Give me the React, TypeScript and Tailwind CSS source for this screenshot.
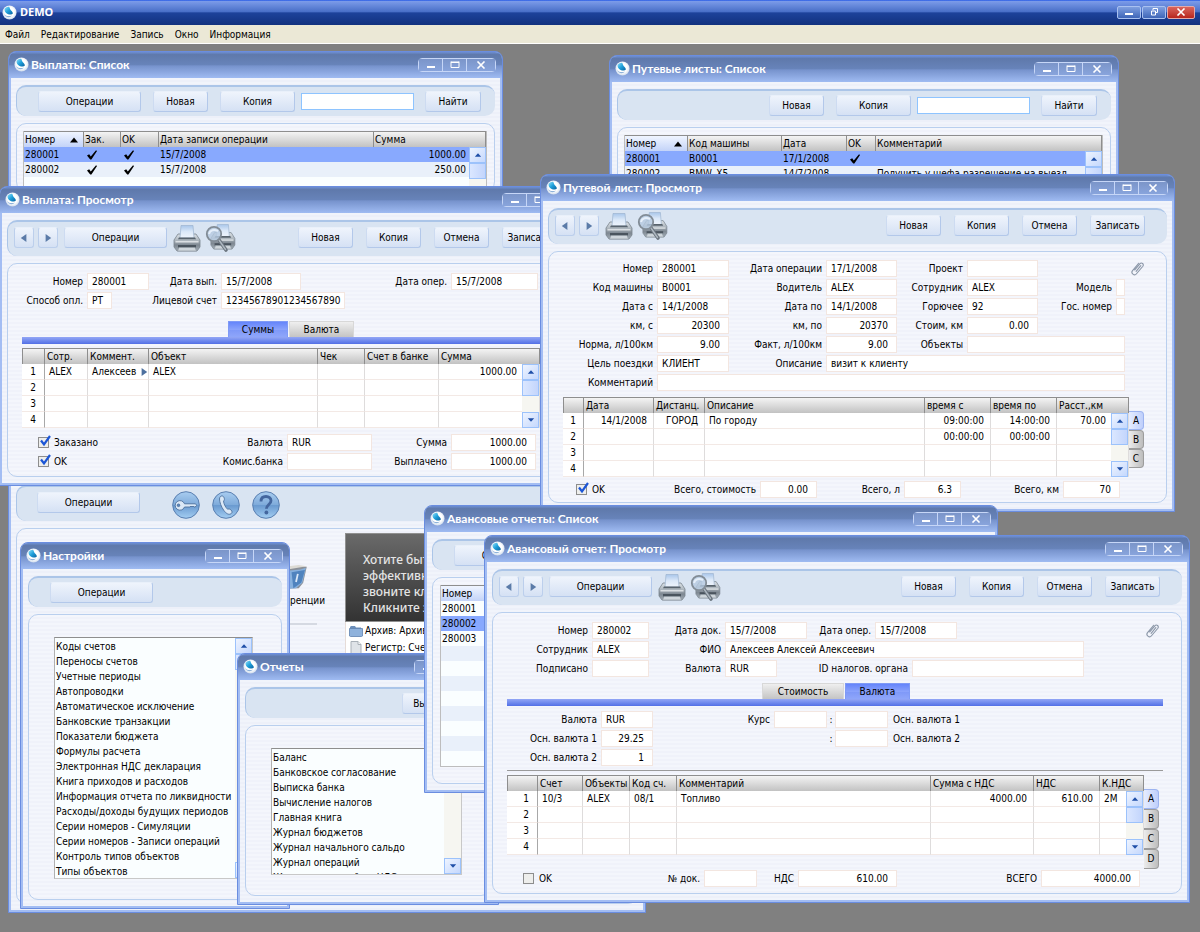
import { useId } from "react";
import type { ReactNode } from "react";

/* ---------- drawings ---------- */

function Logo() {
  return (
    <svg viewBox="0 0 16 16" className="h-[15px] w-[15px] shrink-0" aria-hidden="true">
      <defs>
        <linearGradient id="logo-blue" x1="0" y1="0" x2="1" y2="1">
          <stop offset="0" stopColor="#8fe0fa" />
          <stop offset="0.5" stopColor="#1fa0da" />
          <stop offset="1" stopColor="#0b62a0" />
        </linearGradient>
        <radialGradient id="logo-ball" cx="0.5" cy="0.45" r="0.55">
          <stop offset="0.6" stopColor="#ffffff" />
          <stop offset="1" stopColor="#cfdcec" />
        </radialGradient>
      </defs>
      <circle cx="8" cy="8" r="7.500" fill="url(#logo-ball)" />
      <path d="M2.800 4C4.200 2.300 6.200 1.500 8 2c.2 1.600.8 2.800 2 4 1 1.100 1.800 2.200 1.500 3-.8 1.300-3.300 1.500-5.500.6C3.500 8.400 2.300 6.400 2.800 4z" fill="url(#logo-blue)" />
      <path d="M8 1.500c2.500.6 4.800 3 5.200 6-.8-2-2.800-2.500-3.700-3.300C8.700 3.400 8.200 2.500 8 1.500z" fill="#ffffff" />
      <path d="M2.300 9.500c1.800 2.300 5.200 3 8.200 1.700-1.800 2.800-6.600 2.400-8.200-1.700z" fill="#8fb3da" />
    </svg>
  );
}

function PrinterShape() {
  return (
    <g>
      <path d="M5 9h18l4 6v7l-3 4H4l-3-4v-7z" fill="url(#printer-body)" stroke="#7a848d" strokeWidth="0.800" />
      <path d="M8 .500h12l1 12.500H7z" fill="url(#printer-paper)" stroke="#9db4d0" strokeWidth="0.700" />
      <path d="M6 12.500h16l1 1.800H5z" fill="#58636d" />
      <path d="M2.500 16h23v1.500h-23z" fill="#e8ecef" opacity="0.800" />
      <path d="M5 20h18v2.500H5z" fill="#4a545e" />
      <path d="M6 22.500h16l1.500 3.500h-19z" fill="#cfd6dc" stroke="#8b959e" strokeWidth="0.600" />
    </g>
  );
}

function PrinterDefs() {
  return (
    <defs>
      <linearGradient id="printer-body" x1="0" y1="0" x2="0" y2="1">
        <stop offset="0" stopColor="#dde3e8" />
        <stop offset="0.400" stopColor="#aab3bb" />
        <stop offset="0.650" stopColor="#7d8791" />
        <stop offset="1" stopColor="#a3adb6" />
      </linearGradient>
      <linearGradient id="printer-paper" x1="0" y1="0" x2="0" y2="1">
        <stop offset="0" stopColor="#a9c6ea" />
        <stop offset="0.500" stopColor="#dbe8f8" />
        <stop offset="1" stopColor="#eef4fc" />
      </linearGradient>
    </defs>
  );
}

function PrintIcons() {
  return (
    <div className="flex items-center gap-1 pt-0.5">
      <button type="button" aria-label="Печать">
        <svg viewBox="0 0 28 27" className="h-[27px] w-7">
          <PrinterDefs />
          <PrinterShape />
        </svg>
      </button>
      <button type="button" aria-label="Просмотр печати">
        <svg viewBox="0 0 31 29" className="h-[29px] w-[31px]">
          <PrinterDefs />
          <g transform="translate(5 0) scale(0.920 0.960)">
            <PrinterShape />
          </g>
          <path d="M14 16l7 10" stroke="#6a747e" strokeWidth="3.600" strokeLinecap="round" />
          <path d="M14 16l6.500 9.500" stroke="#aeb8c1" strokeWidth="1.400" strokeLinecap="round" />
          <circle cx="9" cy="10" r="7.200" fill="#b5c9e0" fillOpacity="0.800" stroke="#828c96" strokeWidth="1.800" />
          <path d="M4 10c1-4 5-5 9-3" stroke="#e6effa" strokeWidth="2" fill="none" />
        </svg>
      </button>
    </div>
  );
}

function Paperclip() {
  return (
    <svg viewBox="0 0 14 16" className="h-[15px] w-3.5" aria-hidden="true" fill="none" stroke="#8b97a8" strokeWidth="1.200">
      <path d="M3.500 9.500l5.500-6.500a2 2 0 0 1 3.200 2.600l-6.800 8a2.700 2.700 0 0 1-4.200-3.400l6.500-7.800M5 11l5-6" strokeLinecap="round" />
    </svg>
  );
}

function Tick() {
  return (
    <svg viewBox="0 0 12 10" className="h-2.5 w-3" aria-hidden="true">
      <path d="M1 5.500l2.200-1.200 1.600 2.200L9.800.600l1.400.200-5.800 8.600H4.200z" fill="#000000" />
    </svg>
  );
}

function Triangle({ dir, className }: { dir: "up" | "down" | "left" | "right"; className: string }) {
  const d = {
    up: "M5 2l4 6H1z",
    down: "M1 2h8l-4 6z",
    left: "M8 0v10L1 5z",
    right: "M2 0v10l7-5z",
  }[dir];
  return (
    <svg viewBox="0 0 10 10" preserveAspectRatio="none" className={className} aria-hidden="true">
      <path d={d} fill="currentColor" />
    </svg>
  );
}

function RoundIcon({ kind, label }: { kind: "key" | "phone" | "help"; label: string }) {
  return (
    <button type="button" aria-label={label}>
      <svg viewBox="0 0 28 28" className="h-7 w-7">
        <defs>
          <linearGradient id="round-fill" x1="0" y1="0" x2="0" y2="1">
            <stop offset="0" stopColor="#a9cdf0" />
            <stop offset="0.5" stopColor="#7eaada" />
            <stop offset="0.52" stopColor="#6a9ad0" />
            <stop offset="1" stopColor="#a4cef2" />
          </linearGradient>
        </defs>
        <circle cx="14" cy="14" r="13.300" fill="url(#round-fill)" stroke="#5a7fb0" strokeWidth="1" />
        {kind === "key" && (
          <g fill="#dbe8f6" stroke="#4c6f9c" strokeWidth="0.900">
            <path d="M12.500 12.800h11l1.200 1.500-1.500 1.700h-1.200l-1-1-1 1-1-1-1 1h-5.500a4.800 4.800 0 1 1 0-3.200z" />
            <circle cx="6.500" cy="14.300" r="1.300" fill="#5a86bd" />
          </g>
        )}
        {kind === "phone" && (
          <path
            d="M8.500 5.500c1.500-1.200 3-.4 3.600 1.200.5 1.400.5 2.500-.6 3.300.4 3.200 1.800 6.200 4.200 8.300 1.200-.6 2.300-.3 3.300.7 1.300 1.200 1.500 2.700.1 3.700-2.300 1.500-5-.1-7.200-3.200C9.200 15.800 7.600 11.300 7.500 8c0-1 .3-1.900 1-2.500z"
            fill="#dbe8f6"
            stroke="#4c6f9c"
            strokeWidth="0.900"
          />
        )}
        {kind === "help" && (
          <g>
            <path d="M9 10.500c0-3.300 2.200-5 5-5s5 1.700 5 4.300c0 3.600-4.600 3.900-4.600 8" fill="none" stroke="#44669e" strokeWidth="2.800" />
            <circle cx="14.400" cy="21.500" r="1.900" fill="#44669e" />
          </g>
        )}
      </svg>
    </button>
  );
}

/* ---------- window chrome ---------- */

function WindowControls({ tone = "soft" }: { tone?: "soft" | "main" }) {
  const main = tone === "main";
  const frame = main
    ? "flex h-[14px] gap-px pb-px text-white"
    : "flex h-[14px] divide-x divide-[#c6d6f7] rounded-sm border border-[#c6d6f7] text-white";
  const cell = main
    ? "flex w-6 items-center justify-center rounded-[2px] border border-[#a9c1f0] bg-linear-to-b from-[#7f9fe0] to-[#3f66b8]"
    : "flex w-6 items-center justify-center bg-linear-to-b from-[#7b95c9] to-[#88a4dc]";
  const close = main
    ? "flex w-7 items-center justify-center rounded-[2px] border border-[#e3a9a9] bg-linear-to-b from-[#d9635b] to-[#b8241c]"
    : "flex w-7 items-center justify-center bg-linear-to-b from-[#7b95c9] to-[#88a4dc]";
  return (
    <div className={frame}>
      <button type="button" aria-label="Свернуть" className={cell}>
        <svg viewBox="0 0 10 8" className="h-2 w-2.5"><path d="M1 5h8v2H1z" fill="currentColor" /></svg>
      </button>
      <button type="button" aria-label="Развернуть" className={cell}>
        <svg viewBox="0 0 10 8" className="h-2 w-2.5" fill="none" stroke="currentColor">
          {main ? <path d="M4 2V.500h4.500v4H7M2.500 3h4v4h-4z" /> : <path d="M1 1h8M1 .500v6h8v-6M1 1.500h8" />}
        </svg>
      </button>
      <button type="button" aria-label="Закрыть" className={close}>
        <svg viewBox="0 0 10 8" className="h-2 w-2.5" fill="none" stroke="currentColor" strokeWidth="1.600">
          <path d="M1.500.500l7 7M8.500.500l-7 7" />
        </svg>
      </button>
    </div>
  );
}

function Window({ title, place, children }: { title: string; place: string; children: ReactNode }) {
  return (
    <section
      className={`absolute flex flex-col rounded-t-lg border border-[#6a8de0] bg-[#a3bdf3] ${place}`}
    >
      <header className="flex h-[26px] shrink-0 items-center gap-0.5 rounded-t-[7px] bg-[linear-gradient(#6d8fd4_0%,#5f79ab_10%,#6783b9_48%,#7793cd_54%,#9fbbf2_100%)] pr-1.5 pb-px pl-[5px]">
        <Logo />
        <h2 className="flex-1 truncate font-['Lato',sans-serif] text-xs font-bold text-white">{title}</h2>
        <WindowControls />
      </header>
      <div className="mx-0.5 mb-0.5 flex min-h-0 flex-1 flex-col gap-[7px] bg-[repeating-linear-gradient(#f1f4fb_0px,#f1f4fb_2px,#edf0f9_2px,#edf0f9_4px)] px-[5px] pt-[7px] pb-1.5">
        {children}
      </div>
    </section>
  );
}

function Toolbar({ tall = false, children }: { tall?: boolean; children?: ReactNode }) {
  return (
    <div
      className={`flex shrink-0 items-center rounded-[10px] border-t-2 border-l border-t-[#abc5e8] border-l-[#abc5e8] bg-[#d9e4f2] ${tall ? "h-9 pb-[3px]" : "h-[31px]"}`}
    >
      {children}
    </div>
  );
}

function Panel({ className = "", children }: { className?: string; children?: ReactNode }) {
  return (
    <div
      className={`flex min-h-0 flex-1 flex-col rounded-[10px] border border-[#b9cfee] bg-[repeating-linear-gradient(#f4f6fc_0px,#f4f6fc_2px,#f0f2fa_2px,#f0f2fa_4px)] ${className}`}
    >
      {children}
    </div>
  );
}

function Btn({ w = "w-[55px]", children }: { w?: string; children: ReactNode }) {
  return (
    <button
      type="button"
      className={`h-[21px] shrink-0 rounded-[3px] border border-t-[#e9f0fa] border-r-[#b3c8ea] border-b-[#b3c8ea] border-l-[#cddbf1] bg-linear-to-b from-[#eff4fc] to-[#d5e1f4] text-center leading-none whitespace-nowrap text-black ${w}`}
    >
      {children}
    </button>
  );
}

function NavButtons() {
  return (
    <div className="flex gap-1 text-[#5b7ba8]">
      <button type="button" aria-label="Предыдущая запись" className="flex h-[21px] w-5 items-center justify-center rounded-[3px] border border-[#bccfec] border-t-[#e9f0fa] bg-linear-to-b from-[#eff4fc] to-[#d5e1f4]">
        <Triangle dir="left" className="h-2 w-2" />
      </button>
      <button type="button" aria-label="Следующая запись" className="flex h-[21px] w-5 items-center justify-center rounded-[3px] border border-[#bccfec] border-t-[#e9f0fa] bg-linear-to-b from-[#eff4fc] to-[#d5e1f4]">
        <Triangle dir="right" className="h-2 w-2" />
      </button>
    </div>
  );
}

function ListToolbar({ operations = false }: { operations?: boolean }) {
  return (
    <Toolbar>
      {operations && (
        <div className="pl-[21px]">
          <Btn w="w-[103px]">Операции</Btn>
        </div>
      )}
      <div className="ml-auto flex items-center gap-3 pr-3.5">
        <Btn>Новая</Btn>
        <Btn w="w-[75px]">Копия</Btn>
        <div className="-mr-px -ml-1.5">
          <input aria-label="Поиск" className="block h-[17px] w-[113px] border border-[#8ec4ff] bg-white px-1" />
        </div>
        <Btn w="w-14">Найти</Btn>
      </div>
    </Toolbar>
  );
}

function RecordToolbar({ operations = true }: { operations?: boolean }) {
  return (
    <Toolbar tall>
      <div className="flex items-center gap-1.5 pl-1.5">
        <NavButtons />
        {operations && <Btn w="w-[103px]">Операции</Btn>}
        <PrintIcons />
      </div>
      <div className="ml-auto flex gap-[13px] pr-[22px]">
        <Btn>Новая</Btn>
        <Btn>Копия</Btn>
        <Btn>Отмена</Btn>
        <Btn>Записать</Btn>
      </div>
    </Toolbar>
  );
}

/* ---------- form parts ---------- */

function Field({ label, lw, w, value = "", right = false }: { label: string; lw: string; w: string; value?: string; right?: boolean }) {
  const id = useId();
  return (
    <>
      <label htmlFor={id} className={`flex shrink-0 justify-end pr-1 whitespace-nowrap ${lw}`}>
        {label}
      </label>
      <input
        id={id}
        defaultValue={value}
        className={`block h-[17px] shrink-0 border border-[#f3e6e0] bg-white ${right ? "pr-2 text-right" : w === "w-[9px]" ? "" : "pl-1"} ${w}`}
      />
    </>
  );
}

function Row({ children }: { children: ReactNode }) {
  return <div className="flex items-center">{children}</div>;
}

function Check({ label, checked = false, className }: { label: string; checked?: boolean; className: string }) {
  return (
    <label className={`flex shrink-0 items-center gap-[5px] ${className}`}>
      <span className="relative block h-[11px] w-[11px]">
        <input
          type="checkbox"
          defaultChecked={checked}
          className="peer block h-[11px] w-[11px] appearance-none border border-[#8d8d8d] bg-[#eeeeec]"
        />
        <svg viewBox="0 0 12 12" className="pointer-events-none absolute -top-0.5 left-0.5 hidden h-3 w-3 peer-checked:block" fill="none" stroke="#1c56d6" strokeWidth="2.200">
          <path d="M1 5.500l3 4L10 1" />
        </svg>
      </span>
      {label}
    </label>
  );
}

function Tab({ active = false, w, children }: { active?: boolean; w: string; children: ReactNode }) {
  return (
    <button
      type="button"
      className={`h-4 border border-b-0 text-center leading-none ${
        active
          ? "border-[#7f9af6] bg-[linear-gradient(#6585fb_0%,#8aa2fb_50%,#7e98f8_52%,#8fa6fa_100%)]"
          : "border-[#d8d8d8] bg-linear-to-b from-[#efefef] to-[#c4c4c4]"
      } ${w}`}
    >
      {children}
    </button>
  );
}

function TabStrip({ indent, children }: { indent: string; children: ReactNode }) {
  return (
    <div className="pr-[18px] pl-3.5">
      <div className={`flex gap-px ${indent}`}>{children}</div>
      <div className="h-[7px] bg-linear-to-b from-[#93a6f5] to-[#526fe6]" />
    </div>
  );
}

function ScrollBar({ className }: { className: string }) {
  return (
    <div className={`absolute flex w-[17px] flex-col bg-[#f6f6f1] text-[#1f4fa8] ${className}`}>
      <button type="button" aria-label="Вверх" className="flex h-4 shrink-0 items-center justify-center border border-[#9cc2fb] bg-linear-to-br from-[#eef4ff] to-[#c5d8fd]">
        <Triangle dir="up" className="h-1.5 w-2" />
      </button>
      <div className="h-4 shrink-0 border border-[#9cc2fb] bg-linear-to-r from-[#dbe7ff] to-[#c3d5fc]" />
      <button type="button" aria-label="Вниз" className="mt-auto flex h-4 shrink-0 items-center justify-center border border-[#9cc2fb] bg-linear-to-br from-[#eef4ff] to-[#c5d8fd]">
        <Triangle dir="down" className="h-1.5 w-2" />
      </button>
    </div>
  );
}

type Col = { head: string; w?: string; cell?: string };

function EntryTable({ cols, rows }: { cols: Col[]; rows: ReactNode[][] }) {
  return (
    <div className="relative min-w-0 flex-1">
      <table className="w-full table-fixed border-separate border-spacing-0">
        <thead>
          <tr>
            {cols.map((c, i) => (
              <th
                key={i}
                className={`h-4 border-t border-r border-[#8e8e8e] bg-linear-to-b from-[#f4f4f4] to-[#c2c2c2] p-0 pl-0.5 text-left leading-none font-normal whitespace-nowrap first:border-l ${c.w ?? ""}`}
              >
                {c.head}
              </th>
            ))}
          </tr>
        </thead>
        <tbody>
          {rows.map((r, i) => (
            <tr key={i}>
              {cols.map((c, j) => (
                <td
                  key={j}
                  className={`h-4 border-r border-b border-r-[#dedcdc] border-b-[#f3e9e5] bg-white p-0 leading-none whitespace-nowrap first:border-r-[#a8a8a8] ${c.cell ?? "pl-1"}`}
                >
                  {r[j] ?? ""}
                </td>
              ))}
            </tr>
          ))}
        </tbody>
      </table>
      <ScrollBar className="top-4 right-px bottom-0" />
    </div>
  );
}

function SideTabs({ names, size }: { names: string[]; size: string }) {
  return (
    <div className="flex w-[15px] shrink-0 flex-col pt-3.5">
      {names.map((n, i) => (
        <button
          key={n}
          type="button"
          className={`rounded-r-sm border border-l-0 text-center leading-none ${size} ${
            i === 0
              ? "border-[#9db4f0] bg-linear-to-r from-[#e6edff] to-[#bfcffb]"
              : "border-[#9c9c9c] bg-linear-to-r from-[#ececec] to-[#bdbdbd]"
          }`}
        >
          {n}
        </button>
      ))}
    </div>
  );
}

function ListTable({ cols, rows, selected, blank = 4, scroll = true }: { cols: Col[]; rows: ReactNode[][]; selected: number; blank?: number; scroll?: boolean }) {
  const all = [...rows, ...Array.from({ length: blank }, () => [] as ReactNode[])];
  return (
    <div className="relative border-x border-b border-[#bdbdbd]">
      <table className="w-full table-fixed border-separate border-spacing-0">
        <thead>
          <tr>
            {cols.map((c, i) => (
              <th
                key={i}
                className={`h-4 border-t border-r border-[#8e8e8e] bg-linear-to-b p-0 pl-px text-left leading-none font-normal whitespace-nowrap ${
                  i === 0 ? "from-[#f0f5ff] to-[#c3d3f8]" : "from-[#f4f4f4] to-[#c2c2c2]"
                } ${c.w ?? ""}`}
              >
                {i === 0 ? (
                  <span className="flex items-center justify-between pr-1">
                    {c.head}
                    <Triangle dir="up" className="h-2 w-2.5" />
                  </span>
                ) : (
                  c.head
                )}
              </th>
            ))}
          </tr>
        </thead>
        <tbody>
          {all.map((r, i) => (
            <tr key={i} className={i === selected ? "bg-[#88a9fe]" : i % 2 ? "bg-[#e9f0fa]" : "bg-[#fafeff]"}>
              {cols.map((c, j) => (
                <td key={j} className={`h-[15px] p-0 leading-none whitespace-nowrap ${c.cell ?? "pl-0.5"}`}>
                  {r[j] ?? ""}
                </td>
              ))}
            </tr>
          ))}
        </tbody>
      </table>
      {scroll && <ScrollBar className="top-4 right-0 bottom-0" />}
    </div>
  );
}

function ListBox({ items }: { items: string[] }) {
  return (
    <div className="relative mt-[22px] mr-7 mb-5 ml-[25px] min-h-0 flex-1 overflow-hidden border border-t-[#8e8e8e] border-r-[#c8c8c8] border-b-[#c8c8c8] border-l-[#b0b0b0] bg-[#fafeff] pt-px">
      <ul>
        {items.map((t) => (
          <li key={t} className="h-[15px] pl-px leading-[15px] whitespace-nowrap">
            {t}
          </li>
        ))}
      </ul>
      <ScrollBar className="top-0 right-0 bottom-0" />
    </div>
  );
}

/* ---------- data ---------- */

const settings = [
  "Коды счетов",
  "Переносы счетов",
  "Учетные периоды",
  "Автопроводки",
  "Автоматическое исключение",
  "Банковские транзакции",
  "Показатели бюджета",
  "Формулы расчета",
  "Электронная НДС декларация",
  "Книга приходов и расходов",
  "Информация отчета по ликвидности",
  "Расходы/доходы будущих периодов",
  "Серии номеров - Симуляции",
  "Серии номеров - Записи операций",
  "Контроль типов объектов",
  "Типы объектов",
];

const reports = [
  "Баланс",
  "Банковское согласование",
  "Выписка банка",
  "Вычисление налогов",
  "Главная книга",
  "Журнал бюджетов",
  "Журнал начального сальдо",
  "Журнал операций",
  "Журнал операций по НДС",
];

const menu = ["Файл", "Редактирование", "Запись", "Окно", "Информация"];

/* ---------- windows ---------- */

function PaymentsList() {
  return (
    <Window title="Выплаты: Список" place="top-[7px] left-2 h-[150px] w-[495px]">
      <ListToolbar operations />
      <Panel className="overflow-hidden pt-[7px] pr-[7px] pl-1.5">
        <ListTable
          selected={0}
          cols={[
            { head: "Номер", w: "w-[60px]", cell: "pl-px" },
            { head: "Зак.", w: "w-[37px]", cell: "pl-0.5" },
            { head: "OK", w: "w-[38px]", cell: "pl-0.5" },
            { head: "Дата записи операции", w: "w-[215px]", cell: "pl-px" },
            { head: "Сумма", cell: "pr-5 text-right" },
          ]}
          rows={[
            ["280001", <Tick />, <Tick />, "15/7/2008", "1000.00"],
            ["280002", <Tick />, <Tick />, "15/7/2008", "250.00"],
          ]}
        />
      </Panel>
    </Window>
  );
}

function WaybillsList() {
  return (
    <Window title="Путевые листы: Список" place="top-[11px] left-[609px] h-[150px] w-[510px]">
      <ListToolbar />
      <Panel className="overflow-hidden pt-[7px] pr-[7px] pl-1.5">
        <ListTable
          selected={0}
          cols={[
            { head: "Номер", w: "w-[63px]", cell: "pl-px" },
            { head: "Код машины", w: "w-[94px]", cell: "pl-px" },
            { head: "Дата", w: "w-[65px]", cell: "pl-px" },
            { head: "OK", w: "w-[29px]", cell: "pl-0.5" },
            { head: "Комментарий", cell: "pl-px" },
          ]}
          rows={[
            ["280001", "В0001", "17/1/2008", <Tick />],
            ["280002", "BMW_X5", "14/7/2008", "", "Получить у шефа разрешение на выезд"],
          ]}
        />
      </Panel>
    </Window>
  );
}

function PaymentRecord() {
  return (
    <Window title="Выплата: Просмотр" place="top-[142px] -left-px h-[300px] w-[588px]">
      <RecordToolbar />
      <Panel className="pt-[9px]">
        <div className="flex flex-col gap-0.5">
          <Row>
            <Field label="Номер" lw="w-[79px]" w="w-[62px]" value="280001" />
            <Field label="Дата вып." lw="w-[72px]" w="w-20" value="15/7/2008" />
            <Field label="Дата опер." lw="w-[150px]" w="w-[87px]" value="15/7/2008" />
          </Row>
          <Row>
            <Field label="Способ опл." lw="w-[79px]" w="w-[25px]" value="РТ" />
            <Field label="Лицевой счет" lw="w-[109px]" w="w-[124px]" value="12345678901234567890" />
          </Row>
        </div>
        <div className="mt-3">
          <TabStrip indent="pl-[206px]">
            <Tab active w="w-[60px]">Суммы</Tab>
            <Tab w="w-[65px]">Валюта</Tab>
          </TabStrip>
        </div>
        <div className="mt-1 flex pr-[38px] pl-3.5">
          <EntryTable
            cols={[
              { head: "", w: "w-[23px]", cell: "text-center" },
              { head: "Сотр.", w: "w-[43px]" },
              { head: "Коммент.", w: "w-[61px]" },
              { head: "Объект", w: "w-[169px]" },
              { head: "Чек", w: "w-[47px]" },
              { head: "Счет в банке", w: "w-[74px]" },
              { head: "Сумма", cell: "pr-[22px] text-right" },
            ]}
            rows={[
              [
                "1",
                "ALEX",
                <span className="flex items-center justify-between">
                  Алексеев
                  <Triangle dir="right" className="h-2 w-2 text-[#4d709e]" />
                </span>,
                "ALEX",
                "",
                "",
                "1000.00",
              ],
              ["2"],
              ["3"],
              ["4"],
            ]}
          />
        </div>
        <div className="mt-1.5 flex flex-col gap-0.5">
          <Row>
            <Check label="Заказано" checked className="w-[200px] pl-[30px]" />
            <Field label="Валюта" lw="w-[79px]" w="w-[85px]" value="RUR" />
            <Field label="Сумма" lw="w-[79px]" w="w-[85px]" value="1000.00" right />
          </Row>
          <Row>
            <Check label="OK" checked className="w-[200px] pl-[30px]" />
            <Field label="Комис.банка" lw="w-[79px]" w="w-[85px]" />
            <Field label="Выплачено" lw="w-[79px]" w="w-[85px]" value="1000.00" right />
          </Row>
        </div>
      </Panel>
    </Window>
  );
}

function WaybillRecord() {
  return (
    <Window title="Путевой лист: Просмотр" place="top-[130px] left-[540px] h-[338px] w-[635px]">
      <RecordToolbar operations={false} />
      <Panel className="pt-2">
        <div className="flex flex-col gap-0.5">
          <Row>
            <Field label="Номер" lw="w-[108px]" w="w-[72px]" value="280001" />
            <Field label="Дата операции" lw="w-[97px]" w="w-[71px]" value="17/1/2008" />
            <Field label="Проект" lw="w-[70px]" w="w-[71px]" />
            <span className="pl-[93px]"><Paperclip /></span>
          </Row>
          <Row>
            <Field label="Код машины" lw="w-[108px]" w="w-[72px]" value="В0001" />
            <Field label="Водитель" lw="w-[97px]" w="w-[71px]" value="ALEX" />
            <Field label="Сотрудник" lw="w-[70px]" w="w-[71px]" value="ALEX" />
            <Field label="Модель" lw="w-[78px]" w="w-[9px]" />
          </Row>
          <Row>
            <Field label="Дата с" lw="w-[108px]" w="w-[72px]" value="14/1/2008" />
            <Field label="Дата по" lw="w-[97px]" w="w-[71px]" value="14/1/2008" />
            <Field label="Горючее" lw="w-[70px]" w="w-[71px]" value="92" />
            <Field label="Гос. номер" lw="w-[78px]" w="w-[9px]" />
          </Row>
          <Row>
            <Field label="км, с" lw="w-[108px]" w="w-[72px]" value="20300" right />
            <Field label="км, по" lw="w-[97px]" w="w-[71px]" value="20370" right />
            <Field label="Стоим, км" lw="w-[70px]" w="w-[71px]" value="0.00" right />
          </Row>
          <Row>
            <Field label="Норма, л/100км" lw="w-[108px]" w="w-[72px]" value="9.00" right />
            <Field label="Факт, л/100км" lw="w-[97px]" w="w-[71px]" value="9.00" right />
            <Field label="Объекты" lw="w-[70px]" w="w-[158px]" />
          </Row>
          <Row>
            <Field label="Цель поездки" lw="w-[108px]" w="w-[72px]" value="КЛИЕНТ" />
            <Field label="Описание" lw="w-[97px]" w="w-[299px]" value="визит к клиенту" />
          </Row>
          <Row>
            <Field label="Комментарий" lw="w-[108px]" w="w-[468px]" />
          </Row>
        </div>
        <div className="mt-1.5 flex items-start pr-[22px] pl-3.5">
          <EntryTable
            cols={[
              { head: "", w: "w-[21px]", cell: "text-center" },
              { head: "Дата", w: "w-[70px]", cell: "pr-1.5 text-right" },
              { head: "Дистанц.", w: "w-[51px]", cell: "pr-1.5 text-right" },
              { head: "Описание", w: "w-[220px]" },
              { head: "время с", w: "w-[66px]", cell: "pr-1.5 text-right" },
              { head: "время по", w: "w-[66px]", cell: "pr-1.5 text-right" },
              { head: "Расст.,км", cell: "pr-[22px] text-right" },
            ]}
            rows={[
              ["1", "14/1/2008", "ГОРОД", "По городу", "09:00:00", "14:00:00", "70.00"],
              ["2", "", "", "", "00:00:00", "00:00:00"],
              ["3"],
              ["4"],
            ]}
          />
          <SideTabs names={["A", "B", "C"]} size="h-[19px]" />
        </div>
        <div className="mt-1 flex items-center">
          <Check label="OK" checked className="w-[91px] pl-[27px]" />
          <Field label="Всего, стоимость" lw="w-[120px]" w="w-[57px]" value="0.00" right />
          <Field label="Всего, л" lw="w-[87px]" w="w-[57px]" value="6.3" right />
          <Field label="Всего, км" lw="w-[102px]" w="w-[57px]" value="70" right />
        </div>
      </Panel>
    </Window>
  );
}

function Navigator() {
  return (
    <Window title="" place="top-[407px] left-2 h-[462px] w-[638px]">
      <Toolbar tall>
        <div className="flex items-center gap-8 pl-5">
          <Btn w="w-[103px]">Операции</Btn>
          <div className="flex gap-3 pt-1">
            <RoundIcon kind="key" label="Ключ" />
            <RoundIcon kind="phone" label="Телефон" />
            <RoundIcon kind="help" label="Справка" />
          </div>
        </div>
      </Toolbar>
      <Panel className="pt-1">
        <div className="flex">
          <div className="flex w-[328px] flex-col items-end pt-8 pr-5">
            <svg viewBox="0 0 44 28" className="mr-[17px] h-[25px] w-10" aria-hidden="true">
              <path d="M4 4l30-3 9 1-4 18-5 6-30 1z" fill="#8b9098" />
              <path d="M6 3l28-3 9 1.500-30 5z" fill="#dcdad4" />
              <path d="M2 8l34-3 6-2-4 17-7 6-27 2z" fill="#86b0de" />
              <path d="M26 8l15-2.500-4 14-9 6.500z" fill="#4f83be" />
              <path d="M31 19l2-9" stroke="#dbe9f8" strokeWidth="2" />
            </svg>
            <span className="mt-[3px] leading-4">Конференции</span>
            <span className="mt-3.5 mr-2 h-0.5 w-72 bg-[#d5d9e2]" />
          </div>
          <div className="min-w-0 flex-1">
            <p className="h-[89px] border border-[#909090] bg-linear-to-b from-[#6a6a6a] to-[#333333] pt-[18px] pl-[17px] font-['Noto_Sans',sans-serif] text-xs leading-4 font-medium text-[#e4e4e4]">
              Хотите быть
              <br />
              эффективнее
              <br />
              звоните клиентам
              <br />
              Кликните здесь
            </p>
            <ul className="border-l border-[#e6dcd8] bg-white">
              <li className="flex h-[17px] items-center gap-0.5 pl-[3px]">
                <svg viewBox="0 0 14 12" className="h-3 w-3.5" aria-hidden="true">
                  <path d="M1 2l1-1h4l1 1.500h5V4H1z" fill="#6c8fba" />
                  <path d="M.500 3.500h13V11l-1 .500h-11l-1-.500z" fill="#8fb2dc" stroke="#6083b0" strokeWidth="0.800" />
                </svg>
                Архив: Архив
              </li>
              <li className="flex h-[17px] items-center gap-0.5 pl-[3px]">
                <svg viewBox="0 0 14 14" className="h-3.5 w-3.5" aria-hidden="true">
                  <path d="M2 .500h7l3 3v10H2z" fill="#dfe3e8" stroke="#a9b0b8" />
                  <path d="M9 .500v3h3" fill="#f8f9fa" stroke="#a9b0b8" />
                </svg>
                Регистр: Счета
              </li>
            </ul>
          </div>
        </div>
      </Panel>
    </Window>
  );
}

function SettingsWindow() {
  return (
    <Window title="Настройки" place="top-[498px] left-5 h-[367px] w-[270px]">
      <Toolbar>
        <div className="pl-[21px]">
          <Btn w="w-[103px]">Операции</Btn>
        </div>
      </Toolbar>
      <Panel>
        <ListBox items={settings} />
      </Panel>
    </Window>
  );
}

function ReportsWindow() {
  return (
    <Window title="Отчеты" place="top-[609px] left-[237px] h-[252px] w-[262px]">
      <Toolbar>
        <div className="ml-auto pr-3.5">
          <Btn w="w-[75px]">Выполнить</Btn>
        </div>
      </Toolbar>
      <Panel>
        <ListBox items={reports} />
      </Panel>
    </Window>
  );
}

function AdvanceList() {
  return (
    <Window title="Авансовые отчеты: Список" place="top-[461px] left-[424px] h-[288px] w-[574px]">
      <ListToolbar operations />
      <Panel className="pt-[7px] pr-[7px] pl-[7px]">
        <ListTable
          selected={1}
          blank={8}
          cols={[{ head: "Номер", w: "w-[60px]", cell: "pl-px" }, { head: "" }]}
          rows={[["280001"], ["280002"], ["280003"]]}
        />
      </Panel>
    </Window>
  );
}

function AdvanceRecord() {
  const rate = "block h-[17px] w-[53px] border border-[#f3e6e0] bg-white";
  return (
    <Window title="Авансовый отчет: Просмотр" place="top-[491px] left-[484px] h-[368px] w-[706px]">
      <RecordToolbar />
      <Panel className="pt-[9px]">
        <div className="flex flex-col gap-0.5">
          <Row>
            <Field label="Номер" lw="w-[99px]" w="w-[57px]" value="280002" />
            <Field label="Дата док." lw="w-[76px]" w="w-[82px]" value="15/7/2008" />
            <Field label="Дата опер." lw="w-[68px]" w="w-[82px]" value="15/7/2008" />
            <span className="pl-[189px]"><Paperclip /></span>
          </Row>
          <Row>
            <Field label="Сотрудник" lw="w-[99px]" w="w-[57px]" value="ALEX" />
            <Field label="ФИО" lw="w-[76px]" w="w-[359px]" value="Алексеев Алексей Алексеевич" />
          </Row>
          <Row>
            <Field label="Подписано" lw="w-[99px]" w="w-[57px]" />
            <Field label="Валюта" lw="w-[76px]" w="w-[52px]" value="RUR" />
            <Field label="ID налогов. органа" lw="w-[135px]" w="w-[172px]" />
          </Row>
        </div>
        <div className="mt-1.5">
          <TabStrip indent="pl-[255px]">
            <Tab w="w-[82px]">Стоимость</Tab>
            <Tab active w="w-[65px]">Валюта</Tab>
          </TabStrip>
        </div>
        <div className="mt-[5px] flex flex-col gap-0.5">
          <Row>
            <Field label="Валюта" lw="w-[108px]" w="w-[52px]" value="RUR" />
            <Field label="Курс" lw="w-[121px]" w="w-[53px]" />
            <span className="w-2 text-center">:</span>
            <input aria-label="Курс, осн. валюта 1" className={rate} />
            <span className="pl-[5px]">Осн. валюта 1</span>
          </Row>
          <Row>
            <Field label="Осн. валюта 1" lw="w-[108px]" w="w-[52px]" value="29.25" right />
            <span className="ml-[174px] w-2 text-center">:</span>
            <input aria-label="Курс, осн. валюта 2" className={rate} />
            <span className="pl-[5px]">Осн. валюта 2</span>
          </Row>
          <Row>
            <Field label="Осн. валюта 2" lw="w-[108px]" w="w-[52px]" value="1" right />
          </Row>
        </div>
        <hr className="mt-1 mr-[18px] ml-3.5 border-[#9a9a9a]" />
        <div className="mt-1 flex items-start pr-[22px] pl-3.5">
          <EntryTable
            cols={[
              { head: "", w: "w-[31px]", cell: "pr-2 text-right" },
              { head: "Счет", w: "w-[45px]" },
              { head: "Объекты", w: "w-[47px]" },
              { head: "Код сч.", w: "w-[47px]" },
              { head: "Комментарий", w: "w-[254px]" },
              { head: "Сумма с НДС", w: "w-[103px]", cell: "pr-1.5 text-right" },
              { head: "НДС", w: "w-[66px]", cell: "pr-1.5 text-right" },
              { head: "К.НДС" },
            ]}
            rows={[["1", "10/3", "ALEX", "08/1", "Топливо", "4000.00", "610.00", "2М"], ["2"], ["3"], ["4"]]}
          />
          <SideTabs names={["A", "B", "C", "D"]} size="h-5" />
        </div>
        <div className="mt-px flex items-center">
          <Check label="OK" className="w-[91px] pl-[30px]" />
          <Field label="№ док." lw="w-[120px]" w="w-[53px]" />
          <Field label="НДС" lw="w-[41px]" w="w-[99px]" value="610.00" right />
          <Field label="ВСЕГО" lw="w-36" w="w-[99px]" value="4000.00" right />
        </div>
      </Panel>
    </Window>
  );
}

export default function App() {
  return (
    <div className="flex min-h-screen flex-col overflow-hidden bg-[#808080] font-['DejaVu_Sans_Condensed','DejaVu_Sans',sans-serif] text-[10px] text-black">
      <header className="flex h-[25px] items-center gap-[3px] bg-[linear-gradient(#2257e6_0%,#7a9ae8_6%,#4a70c8_46%,#1d429a_52%,#12327f_100%)] pr-[5px] pl-0.5">
        <Logo />
        <h1 className="flex-1 font-['Noto_Sans',sans-serif] text-[11px] font-bold text-white">DEMO</h1>
        <WindowControls tone="main" />
      </header>
      <nav className="flex h-[19px] items-center gap-[11px] border-b border-white bg-[#ebe8d6] pl-[5px]">
        {menu.map((m) => (
          <button key={m} type="button">
            {m}
          </button>
        ))}
      </nav>
      <main className="relative flex-1">
        <PaymentsList />
        <WaybillsList />
        <Navigator />
        <PaymentRecord />
        <WaybillRecord />
        <SettingsWindow />
        <ReportsWindow />
        <AdvanceList />
        <AdvanceRecord />
      </main>
    </div>
  );
}
